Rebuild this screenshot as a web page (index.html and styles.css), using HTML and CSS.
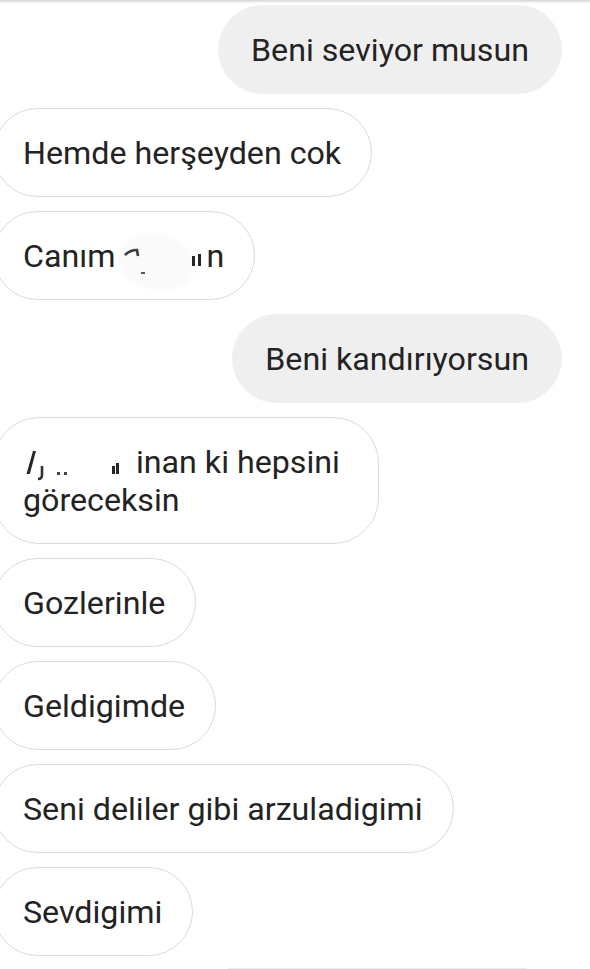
FILE: index.html
```html
<!DOCTYPE html>
<html lang="tr">
<head>
<meta charset="utf-8">
<title>Sohbet</title>
<link rel="stylesheet" href="styles.css">
</head>
<body>
<div class="topbar"></div>
<main class="thread">
  <div class="msg msg-out">Beni seviyor musun</div>
  <div class="msg msg-in">Hemde herşeyden cok</div>
  <div class="msg msg-in">Canım<span class="hidden-name hn-1"><svg class="frags" width="91" height="38" viewBox="0 0 91 38"><path d="M10 18 Q15 13 22 13 L23 19" fill="none" stroke="#3a3a3a" stroke-width="2.6"/><rect x="26" y="35" width="4" height="2" fill="#555"/><rect x="77" y="19" width="3" height="10" fill="#262626"/><rect x="83" y="17" width="3" height="12" fill="#262626"/></svg></span>n<span class="smudge s1"></span></div>
  <div class="msg msg-out">Beni kandırıyorsun</div>
  <div class="msg msg-in msg-wide"><span class="hidden-name hn-2"><svg class="frags" width="105" height="38" viewBox="0 0 105 38"><path d="M3.5 31 L10 8 L13 8 L6.8 31 Z" fill="#262626"/><path d="M19 23 L19 32 Q19 36 15 36" fill="none" stroke="#333" stroke-width="2.6"/><rect x="34" y="29" width="3" height="3" fill="#444"/><rect x="41" y="29" width="3" height="3" fill="#444"/><rect x="89" y="23" width="3" height="8" fill="#262626"/><rect x="93" y="20" width="3" height="11" fill="#262626"/></svg></span> inan ki hepsini<br>göreceksin</div>
  <div class="msg msg-in">Gozlerinle</div>
  <div class="msg msg-in">Geldigimde</div>
  <div class="msg msg-in">Seni deliler gibi arzuladigimi</div>
  <div class="msg msg-in">Sevdigimi</div>
  <div class="next-edge"></div>
</main>
</body>
</html>
```
FILE: styles.css
```css
html, body {
  margin: 0;
  padding: 0;
  background: #ffffff;
  overflow: hidden;
}
body {
  width: 590px;
  height: 969px;
  font-family: Roboto, "Noto Sans", "Liberation Sans", sans-serif;
  color: #232323;
}
.topbar {
  height: 4px;
  background: linear-gradient(#d4d4d4, #f4f4f4 60%, #ffffff);
}
.thread {
  display: flex;
  flex-direction: column;
  gap: 14px;
  padding-top: 1px;
}
.msg {
  position: relative;
  font-size: 32.2px;
  line-height: 38px;
  border-radius: 46px;
  padding: 25px 0 24px;
  white-space: nowrap;
}
.msg-out {
  align-self: flex-end;
  margin-right: 28px;
  background: #efefef;
  border: 1px solid #efefef;
  padding-left: 32px;
  padding-right: 32px;
}
.msg-in {
  align-self: flex-start;
  margin-left: -7px;
  background: #ffffff;
  border: 1px solid #dbdbdb;
  padding-left: 29px;
  padding-right: 30px;
  z-index: 0;
}
.msg-wide {
  padding-right: 38px;
}
.hidden-name {
  display: inline-block;
  position: relative;
  height: 38px;
  vertical-align: top;
}
.hn-1 { width: 91px; }
.hn-2 { width: 105px; }
.frags {
  display: block;
}
.smudge {
  position: absolute;
  left: 124px;
  top: 22px;
  width: 76px;
  height: 56px;
  background: #f6f6f6;
  border-radius: 45% 55% 40% 60%;
  filter: blur(2px);
  opacity: 0.5;
  z-index: -1;
}
.next-edge {
  margin-left: 228px;
  width: 299px;
  height: 1px;
  background: #ececec;
  margin-top: -2px;
}
```
